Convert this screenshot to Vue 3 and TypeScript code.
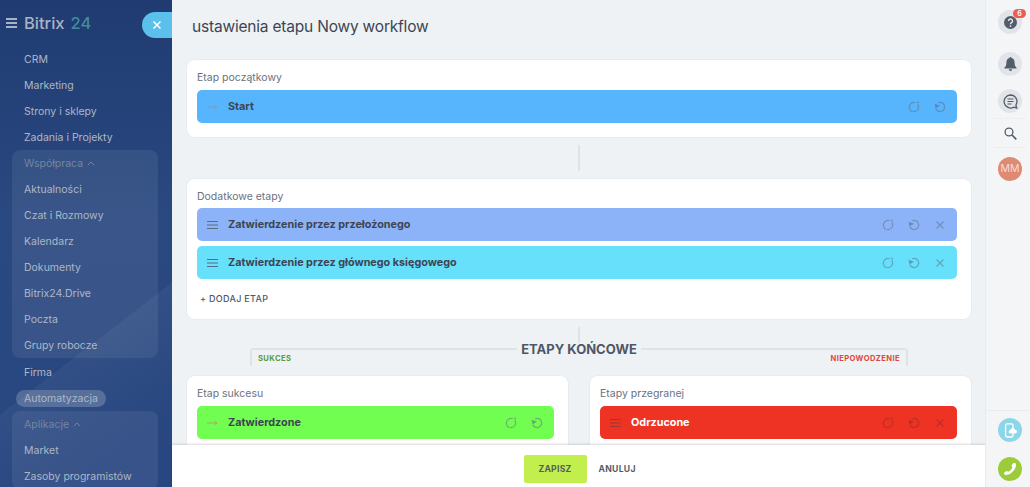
<script setup lang="ts">
interface Stage {
  name: string;
  color: string;
  handle: "arrow" | "lines";
  removable: boolean;
  light?: boolean;
}

const topItems = ["CRM", "Marketing", "Strony i sklepy", "Zadania i Projekty"];
const workItems = ["Aktualności", "Czat i Rozmowy", "Kalendarz", "Dokumenty", "Bitrix24.Drive", "Poczta", "Grupy robocze"];
const appItems = ["Market", "Zasoby programistów"];

const extraStages: Stage[] = [
  { name: "Zatwierdzenie przez przełożonego", color: "#8cb3f8", handle: "lines", removable: true },
  { name: "Zatwierdzenie przez głównego księgowego", color: "#66e0fb", handle: "lines", removable: true },
];
const startStage: Stage = { name: "Start", color: "#57b5fe", handle: "arrow", removable: false };
const successStage: Stage = { name: "Zatwierdzone", color: "#72fe50", handle: "arrow", removable: false };
const failStage: Stage = { name: "Odrzucone", color: "#ee3224", handle: "lines", removable: true, light: true };

const stageGroups: { title: string; stages: Stage[] }[] = [
  { title: "Etap sukcesu", stages: [successStage] },
  { title: "Etapy przegranej", stages: [failStage] },
];
</script>

<template>
  <div class="page">
    <aside class="sidebar">
      <div class="logo">
        <span class="burger"><i></i><i></i><i></i></span>
        <span class="logo-name">Bitrix</span>
        <span class="logo-num">24</span>
      </div>
      <button class="close-tab" aria-label="Zamknij">
        <svg width="10" height="10" viewBox="0 0 10 10"><path d="M1.5 1.5l7 7M8.5 1.5l-7 7" stroke="#fff" stroke-width="1.5" fill="none" /></svg>
      </button>
      <nav class="nav">
        <a v-for="item in topItems" :key="item" class="nav-item">{{ item }}</a>
        <div class="nav-group">
          <a class="nav-item nav-head">Współpraca <svg width="8" height="5" viewBox="0 0 8 5"><path d="M.8 4.2L4 1l3.2 3.2" stroke="currentColor" fill="none" /></svg></a>
          <a v-for="item in workItems" :key="item" class="nav-item">{{ item }}</a>
        </div>
        <a class="nav-item">Firma</a>
        <a class="nav-item"><span class="nav-active">Automatyzacja</span></a>
        <div class="nav-group">
          <a class="nav-item nav-head">Aplikacje <svg width="8" height="5" viewBox="0 0 8 5"><path d="M.8 4.2L4 1l3.2 3.2" stroke="currentColor" fill="none" /></svg></a>
          <a v-for="item in appItems" :key="item" class="nav-item">{{ item }}</a>
        </div>
      </nav>
    </aside>

    <main class="main">
      <div class="scroll">
        <h1 class="title">ustawienia etapu Nowy workflow</h1>

        <section class="card">
          <div class="card-label">Etap początkowy</div>
          <div class="stage" :class="{ light: startStage.light }" :style="{ background: startStage.color }">
            <svg class="handle" width="11" height="8" viewBox="0 0 11 8"><path d="M1 4h9M7.500 2.500L10 4 7.500 5.500" stroke="#9a8a8a" stroke-opacity=".5" fill="none" /></svg>
            <span class="stage-name">{{ startStage.name }}</span>
            <span class="stage-tools">
              <svg class="tool" viewBox="0 0 12 12"><path d="M7.600 1.700A4.600 4.600 0 0 0 2.300 8.700M4.400 10.300A4.600 4.600 0 0 0 9.700 3.300" /><path class="solid" d="M8.400.8h2.200v2.200zM1.400 9h2.200v2.200z" /></svg>
              <svg class="tool" viewBox="0 0 12 12"><path d="M4 1.800A4.600 4.600 0 1 1 1.700 7.500" /><path class="solid" d="M.6 2.800L6 4.800 1.500 7.200z" /></svg>
            </span>
          </div>
        </section>

        <div class="link-line"></div>

        <section class="card">
          <div class="card-label">Dodatkowe etapy</div>
          <div class="stage-list">
            <div v-for="stage in extraStages" :key="stage.name" class="stage" :style="{ background: stage.color }">
              <svg class="handle" width="11" height="8" viewBox="0 0 11 8"><path d="M0 .5h11M0 4h11M0 7.500h11" stroke="#5b6b85" fill="none" /></svg>
              <span class="stage-name">{{ stage.name }}</span>
              <span class="stage-tools">
                <svg class="tool" viewBox="0 0 12 12"><path d="M7.600 1.700A4.600 4.600 0 0 0 2.300 8.700M4.400 10.300A4.600 4.600 0 0 0 9.700 3.300" /><path class="solid" d="M8.400.8h2.200v2.200zM1.400 9h2.200v2.200z" /></svg>
                <svg class="tool" viewBox="0 0 12 12"><path d="M4 1.800A4.600 4.600 0 1 1 1.700 7.500" /><path class="solid" d="M.6 2.800L6 4.800 1.500 7.200z" /></svg>
                <svg class="tool" viewBox="0 0 12 12"><path d="M2.500 2.500l7 7M9.500 2.500l-7 7" /></svg>
              </span>
            </div>
          </div>
          <div class="add-stage">+ DODAJ ETAP</div>
        </section>

        <div class="link-line short"></div>

        <div class="final-head">
          <div class="bracket left"><span>SUKCES</span></div>
          <div class="final-title">ETAPY KOŃCOWE</div>
          <div class="bracket right"><span>NIEPOWODZENIE</span></div>
        </div>

        <div class="final-cards">
          <section v-for="group in stageGroups" :key="group.title" class="card">
            <div class="card-label">{{ group.title }}</div>
            <div
              v-for="stage in group.stages"
              :key="stage.name"
              class="stage"
              :class="{ light: stage.light }"
              :style="{ background: stage.color }"
            >
              <svg v-if="stage.handle === 'arrow'" class="handle" width="11" height="8" viewBox="0 0 11 8"><path d="M0 4h10M7.500 2.500L10 4 7.500 5.500" stroke="#a8a868" fill="none" /></svg>
              <svg v-else class="handle" width="11" height="8" viewBox="0 0 11 8"><path d="M0 .5h11M0 4h11M0 7.500h11" stroke="#9c3a30" fill="none" /></svg>
              <span class="stage-name">{{ stage.name }}</span>
              <span class="stage-tools">
                <svg class="tool" viewBox="0 0 12 12"><path d="M7.600 1.700A4.600 4.600 0 0 0 2.300 8.700M4.400 10.300A4.600 4.600 0 0 0 9.700 3.300" /><path class="solid" d="M8.400.8h2.200v2.200zM1.400 9h2.200v2.200z" /></svg>
                <svg class="tool" viewBox="0 0 12 12"><path d="M4 1.800A4.600 4.600 0 1 1 1.700 7.500" /><path class="solid" d="M.6 2.800L6 4.800 1.500 7.200z" /></svg>
                <svg v-if="stage.removable" class="tool" viewBox="0 0 12 12"><path d="M2.500 2.500l7 7M9.500 2.500l-7 7" /></svg>
              </span>
            </div>
          </section>
        </div>
      </div>

      <footer class="footer">
        <button class="btn-save">ZAPISZ</button>
        <button class="btn-cancel">ANULUJ</button>
      </footer>
    </main>

    <aside class="rail">
      <div class="rail-top">
        <div class="round">
          <svg width="13" height="13" viewBox="0 0 13 13"><circle cx="6.500" cy="6.500" r="6.500" fill="#535c69" /><path d="M4.500 5a2 2 0 1 1 3 1.700c-.7.4-1 .7-1 1.500" stroke="#e4e7eb" stroke-width="1.400" fill="none" /><circle cx="6.500" cy="10.100" r=".9" fill="#e4e7eb" /></svg>
          <span class="badge">6</span>
        </div>
        <div class="round">
          <svg width="13" height="14" viewBox="0 0 13 14"><path d="M6.500 0a1 1 0 0 1 1 1.100C9.600 1.600 10.600 3.300 10.600 5.600c0 2.800.6 3.900 2 5.100v.8H.4v-.8c1.400-1.200 2-2.300 2-5.100 0-2.300 1-4 3.100-4.500A1 1 0 0 1 6.500 0z" fill="#535c69" /><path d="M4.800 12.300h3.400a1.700 1.700 0 0 1-3.400 0z" fill="#535c69" /></svg>
        </div>
        <div class="round">
          <svg width="15" height="15" viewBox="0 0 15 15"><path d="M7.500 1a6.500 6.500 0 1 0 3.200 12.200l3 .8-.8-3A6.500 6.500 0 0 0 7.500 1z" fill="none" stroke="#535c69" stroke-width="1.300" /><path d="M4.500 5h6M4.500 7.500h6M4.500 10h4" stroke="#535c69" stroke-width="1.200" /></svg>
        </div>
        <div class="rail-search">
          <svg width="13" height="13" viewBox="0 0 13 13"><circle cx="5" cy="5" r="3.900" fill="none" stroke="#535c69" stroke-width="1.300" /><path d="M8 8l4.300 4.300" stroke="#535c69" stroke-width="1.700" /></svg>
        </div>
        <div class="avatar">MM</div>
      </div>
      <div class="rail-bottom">
        <div class="round small-blue">
          <svg width="15" height="15" viewBox="0 0 15 15"><rect x="2.600" y=".8" width="7.400" height="13.200" rx="1.400" fill="none" stroke="#fff" stroke-width="1.300" /><path d="M7 10.600a1.900 1.900 0 0 1 .3-3.700 2.600 2.600 0 0 1 4.900-.2 2 2 0 0 1 .4 3.900z" fill="#fff" /></svg>
        </div>
        <div class="round small-green">
          <svg width="14" height="14" viewBox="0 0 14 14"><path d="M13 1.800c.5 5.400-4.700 11-10.300 11.200-.8 0-1.700-1.100-1.700-1.900 0-.5 2.400-2.100 2.900-2.100.6 0 .8.900 1.400.8 1.500-.4 3.800-3 4-4.500.1-.6-.8-.9-.8-1.500 0-.5 1.700-2.800 2.200-2.800.8 0 2.200.1 2.300.8z" fill="#fff" /></svg>
        </div>
      </div>
    </aside>
  </div>
</template>

<style scoped>
.page {
  display: flex;
  width: 1030px;
  height: 487px;
  overflow: hidden;
  font-family: Inter, "Liberation Sans", sans-serif;
  background: #eff2f5;
}

/* sidebar */
.sidebar {
  position: relative;
  flex: 0 0 172px;
  background:
    linear-gradient(142.5deg, transparent 67%, rgba(255, 255, 255, 0.045) 67%, transparent 88%),
    linear-gradient(180deg, #1f3b72 0%, #2a4980 45%, #284680 100%);
  color: #aeb7c6;
  overflow: visible;
  z-index: 1;
}
.logo {
  display: flex;
  align-items: center;
  height: 24px;
  margin-top: 11px;
  padding-left: 6px;
  font-size: 16.5px;
  font-weight: 500;
  line-height: 24px;
}
.burger {
  display: flex;
  flex-direction: column;
  gap: 2.5px;
  width: 11px;
  margin-right: 7px;
}
.burger i {
  display: block;
  height: 1.5px;
  background: #a5b2c8;
}
.logo-name {
  color: #aab4c5;
}
.logo-num {
  margin-left: 6px;
  color: #3f8c9a;
}
.close-tab {
  position: absolute;
  top: 12px;
  left: 142px;
  display: flex;
  align-items: center;
  justify-content: center;
  width: 30px;
  height: 26px;
  padding: 0;
  border: 0;
  border-radius: 13px 0 0 13px;
  background: #5cc0ec;
}
.nav {
  display: flex;
  flex-direction: column;
  margin-top: 11px;
}
.nav-item {
  display: flex;
  align-items: center;
  gap: 4px;
  height: 26px;
  padding-left: 24px;
  font-size: 10.5px;
  color: #aeb7c6;
  white-space: nowrap;
}
.nav-head {
  padding-left: 12px;
  color: #75859f;
}
.nav-group {
  margin: 0 14px 1px 12px;
  border-radius: 8px;
  background: rgba(255, 255, 255, 0.07);
}
.nav-group .nav-item {
  padding-left: 12px;
}
.nav-active {
  margin-left: -8px;
  padding: 2px 8px;
  border-radius: 9px;
  background: rgba(255, 255, 255, 0.2);
}

/* main column */
.main {
  display: flex;
  flex: 1;
  flex-direction: column;
  min-width: 0;
}
.scroll {
  flex: 1;
  min-height: 0;
  overflow: hidden;
  padding: 0 15px;
}
.title {
  margin: 0;
  padding: 17px 0 0 5px;
  height: 60px;
  box-sizing: border-box;
  font-size: 15.5px;
  font-weight: 400;
  line-height: 20px;
  letter-spacing: -0.2px;
  color: #3d4553;
}
.card {
  padding: 11px 14px 14px 10px;
  border-radius: 8px;
  background: #fff;
  box-shadow: 0 0 0 1px #e8ebef;
}
.card-label {
  height: 16px;
  margin-bottom: 3px;
  font-size: 10.5px;
  line-height: 14px;
  color: #6a7280;
}
.stage {
  display: flex;
  align-items: center;
  height: 33px;
  padding-left: 10px;
  border-radius: 5px;
}
.handle {
  flex: none;
  margin-right: 10px;
}
.stage-name {
  flex: 1;
  font-size: 10.8px;
  font-weight: 700;
  color: #3d4553;
}
.stage.light .stage-name {
  color: #fff;
}
.stage-tools {
  display: flex;
  gap: 14px;
  padding-right: 11px;
}
.tool {
  width: 12px;
  height: 12px;
  fill: none;
  stroke: #5b6b85;
  stroke-opacity: 0.5;
  stroke-width: 1.2;
}
.tool .solid {
  fill: #5b6b85;
  fill-opacity: 0.6;
  stroke: none;
}
.stage.light .tool {
  stroke: #8f2d26;
}
.stage.light .tool .solid {
  fill: #8f2d26;
}
.stage-list {
  display: flex;
  flex-direction: column;
  gap: 5px;
  margin-top: -1px;
}
.add-stage {
  margin-top: 14px;
  padding-left: 3px;
  font-size: 9px;
  font-weight: 500;
  line-height: 12px;
  letter-spacing: 0.3px;
  color: #4e5766;
}
.link-line {
  width: 2px;
  height: 26px;
  margin: 8px auto;
  background: #dfe3e8;
}
.link-line.short {
  height: 16px;
  margin: 8px auto 0;
}
.final-head {
  display: flex;
  align-items: flex-start;
  height: 28px;
  padding: 5px 63px 0;
}
.bracket {
  flex: 1;
  height: 18px;
  padding-top: 3px;
  box-sizing: border-box;
  border-top: 2px solid #dfe3e8;
  font-size: 7.6px;
  font-weight: 700;
  line-height: 12px;
  letter-spacing: 0.4px;
}
.bracket.left {
  padding-left: 6px;
  border-left: 2px solid #dfe3e8;
  border-top-left-radius: 3px;
  color: #5b9a35;
}
.bracket.right {
  padding-right: 6px;
  text-align: right;
  border-right: 2px solid #dfe3e8;
  border-top-right-radius: 3px;
  color: #e0483a;
}
.final-title {
  margin: -7px 4px 0;
  font-size: 13px;
  font-weight: 700;
  line-height: 16px;
  color: #4e5766;
}
.final-cards {
  display: grid;
  grid-template-columns: 381px 381px;
  justify-content: space-between;
}

/* footer */
.footer {
  display: flex;
  flex: 0 0 42px;
  box-sizing: border-box;
  align-items: center;
  justify-content: center;
  gap: 12px;
  padding-top: 6px;
  background: #fff;
  box-shadow: 0 -1px 2px rgba(0, 0, 0, 0.14);
  z-index: 1;
}
.btn-save,
.btn-cancel {
  border: 0;
  font-family: inherit;
  font-size: 8.6px;
  font-weight: 700;
  letter-spacing: 0.3px;
  color: #535c69;
}
.btn-save {
  width: 63px;
  height: 28px;
  border-radius: 2px;
  background: #c2ee4e;
}
.btn-cancel {
  width: 36px;
  padding: 0;
  background: none;
}

/* right rail */
.rail {
  display: flex;
  flex: 0 0 44px;
  box-sizing: border-box;
  flex-direction: column;
  justify-content: space-between;
  padding-left: 4px;
  background: #f3f5f7;
  box-shadow: -1px 0 0 #e9ecef;
  z-index: 2;
}
.rail-top,
.rail-bottom {
  display: flex;
  flex-direction: column;
  align-items: center;
}
.rail-top {
  padding-top: 10px;
}
.rail-bottom {
  gap: 15px;
  margin-left: -4px;
  padding: 7px 0 6px 4px;
  border-top: 1px solid #e9ecef;
}
.round {
  position: relative;
  display: flex;
  align-items: center;
  justify-content: center;
  width: 24px;
  height: 24px;
  margin-bottom: 18px;
  border-radius: 50%;
  background: #e1e4e8;
}
.round + .round {
  margin-bottom: 13px;
}
.round + .round + .round {
  margin-bottom: 5px;
}
.rail-bottom .round {
  margin: 0;
}
.badge {
  position: absolute;
  top: -1px;
  right: -4px;
  width: 13px;
  height: 9px;
  border-radius: 5px;
  background: #ed5c52;
  font-size: 7px;
  font-weight: 600;
  line-height: 9px;
  text-align: center;
  color: #fff;
}
.rail-search {
  display: flex;
  align-items: center;
  justify-content: center;
  width: 32px;
  height: 30px;
  box-sizing: border-box;
  border-top: 1px solid #eceff2;
  border-bottom: 1px solid #eceff2;
  margin-bottom: 9px;
}
.avatar {
  width: 24px;
  height: 24px;
  border-radius: 50%;
  background: #de8a74;
  font-size: 10.5px;
  line-height: 24px;
  text-align: center;
  color: #f7ddd6;
}
.small-blue {
  background: #8bd6e9;
}
.small-green {
  background: #9ccc3c;
}
</style>

<style>
html,
body {
  margin: 0;
  overflow: hidden;
}
</style>
